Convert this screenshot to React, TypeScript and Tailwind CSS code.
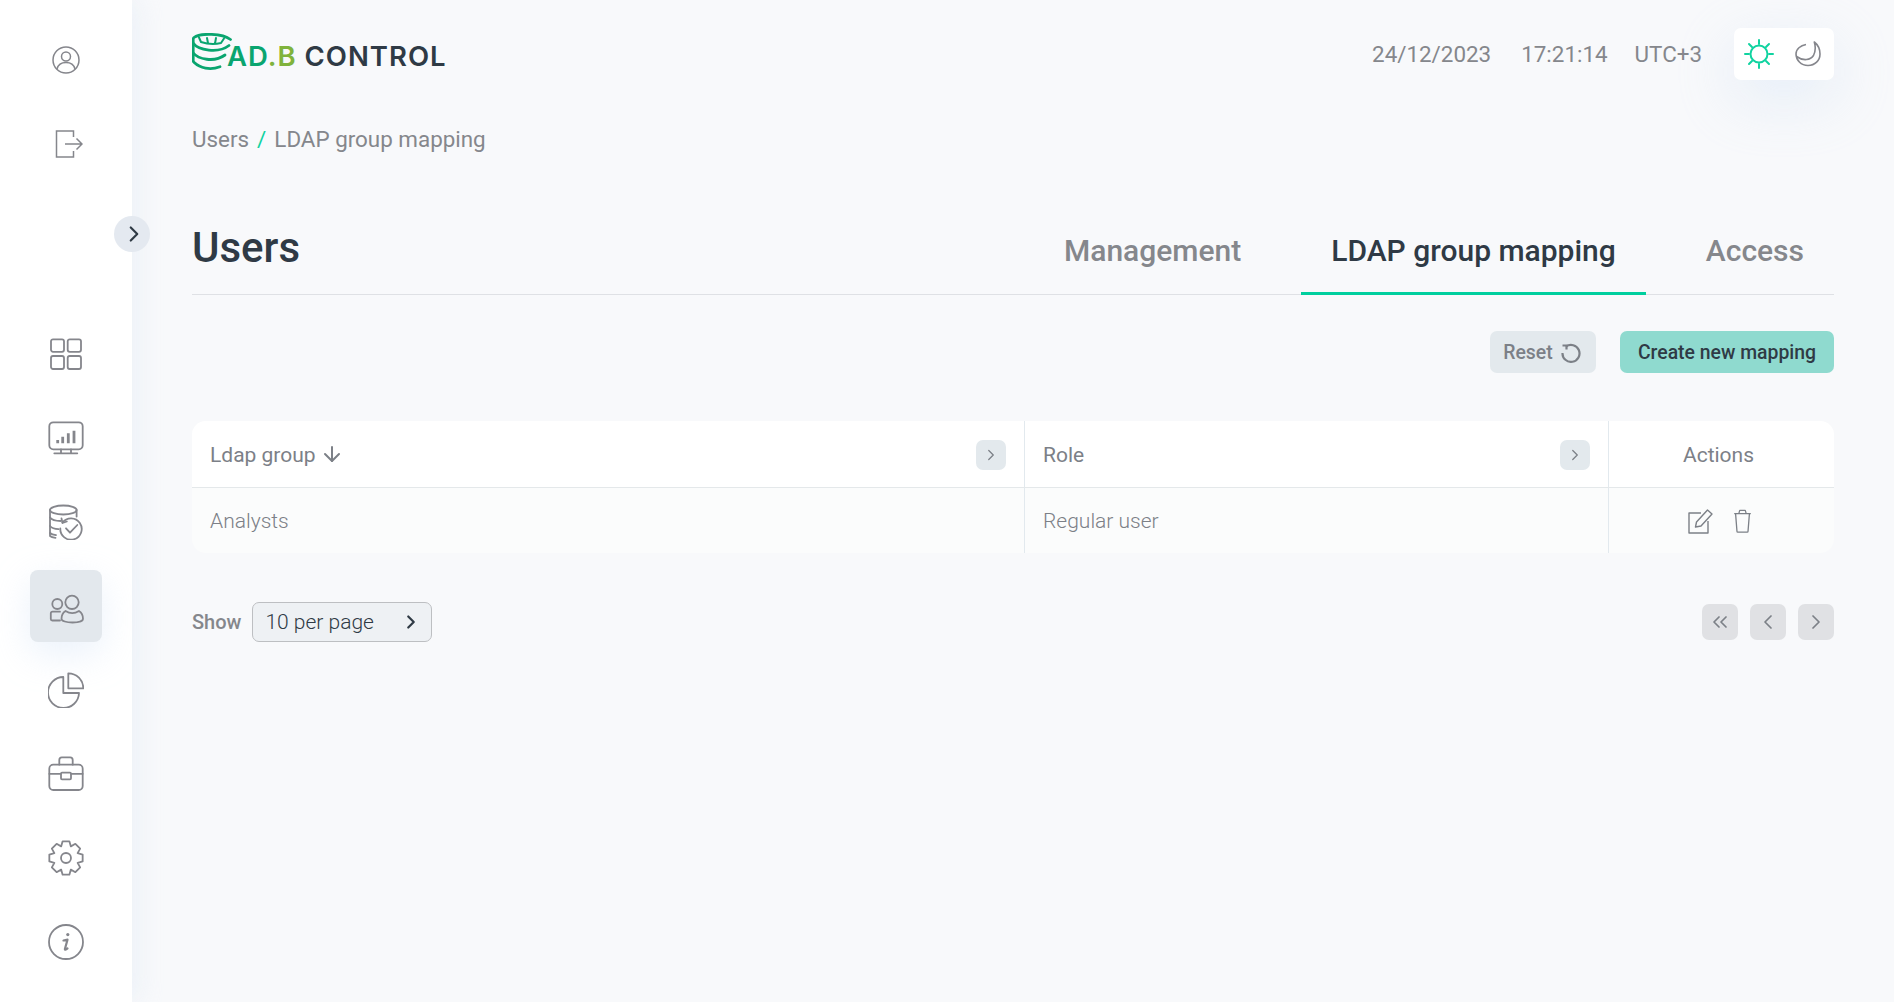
import React from 'react';
import { ArrowDown, ChevronLeft, ChevronRight, ChevronsLeft } from 'lucide-react';

const NavIcon: React.FC<{ children: React.ReactNode }> = ({ children }) => (
  <svg width="36" height="36" viewBox="0 0 36 36" fill="none" stroke="#85868c" strokeWidth="1.8" strokeLinecap="round" strokeLinejoin="round">
    {children}
  </svg>
);

// 8 tooth gear outline, centred in the 36 box
const gearPath = () => {
  const pts: string[] = [];
  for (let i = 0; i < 8; i++) {
    const a = (i * Math.PI) / 4 - Math.PI / 2;
    [
      [-0.39, 12.6],
      [-0.2, 17],
      [0.2, 17],
      [0.39, 12.6],
    ].forEach(([d, r]) => {
      pts.push(`${(18 + r * Math.cos(a + d)).toFixed(2)} ${(18 + r * Math.sin(a + d)).toFixed(2)}`);
    });
  }
  return `M${pts.join('L')}z`;
};

const NAV_ITEMS = [
  {
    id: 'dashboard',
    icon: (
      <>
        <rect x="3" y="3.300" width="13" height="12.500" rx="2" />
        <rect x="19.700" y="3.300" width="13.300" height="12.500" rx="2" />
        <rect x="3" y="20" width="13" height="13" rx="2" />
        <rect x="19.700" y="20" width="13.300" height="13" rx="2" />
      </>
    ),
  },
  {
    id: 'monitoring',
    icon: (
      <>
        <rect x="1.300" y="2.300" width="33.400" height="27" rx="4" />
        <path d="M13 29.300v4M23 29.300v4M6.300 33.300h23" />
        <path d="M9.700 23.300V20M14.700 23.300v-6.600M20.300 23.300v-10M26 23.300V10.700" strokeWidth="2.800" strokeLinecap="butt" />
      </>
    ),
  },
  {
    id: 'backups',
    icon: (
      <>
        <ellipse cx="15.300" cy="6" rx="13.300" ry="4.500" />
        <path d="M2 6v26c1 .9 3 1.500 5.500 1.800" />
        <path d="M28.600 6v6.500" />
        <path d="M2 13.500c1.500 2 5.500 3.500 10.500 3.500M2 22c1.500 1.700 4.500 3 8.500 3.200M2 29c1.200 1 3.500 1.800 6 2.200" />
        <path d="M14.500 18.500a10.700 10.700 0 1 1-2.200 6" />
        <path d="M13.500 14.500l1 4.500 4.300-1.500" />
        <path d="M18 24.300l4 4.400 7.300-7.700" />
      </>
    ),
  },
  {
    id: 'users',
    active: true,
    icon: (
      <>
        <circle cx="9.300" cy="16" r="5" />
        <circle cx="24" cy="14.300" r="6.700" />
        <path d="M12 23.700H4.500c-1 0-1.700.8-1.700 1.700V31c0 .8.700 1.500 1.500 1.500H12" />
        <path d="M13.500 31c0-4 1.500-6.500 4-8 4 2.500 9.500 2.500 13.500 0 2.500 1.500 4 4 4 8 0 2-4.500 3.500-10.500 3.500S13.500 33 13.500 31z" />
      </>
    ),
  },
  {
    id: 'reports',
    icon: (
      <>
        <path d="M15.300 5A15.500 15.500 0 1 0 31 21H15.300z" />
        <path d="M20.300 1.300V16.300H35.300A15 15 0 0 0 20.300 1.300z" />
      </>
    ),
  },
  {
    id: 'tools',
    icon: (
      <>
        <rect x="1.300" y="8.700" width="33.400" height="25.300" rx="4" />
        <path d="M11.300 8.700V4c0-1.500 1-2.700 2.500-2.700h8.400c1.500 0 2.500 1.200 2.500 2.700v4.700" />
        <path d="M1.300 17.800H13M23 17.800h11.700" />
        <rect x="13" y="16.700" width="10" height="6.600" rx="1" />
      </>
    ),
  },
  {
    id: 'settings',
    icon: (
      <>
        <circle cx="18" cy="18" r="5" />
        <path d={gearPath()} />
      </>
    ),
  },
  {
    id: 'info',
    icon: (
      <>
        <circle cx="18" cy="18" r="17" />
        <path d="M15.500 16.500l4-.8-2.600 9.300c-.2.900.8 1 2.600-.6" strokeWidth="2.200" />
        <path d="M19.800 10.500v.1" strokeWidth="3.200" />
      </>
    ),
  },
];

const SmallButton: React.FC<{ children: React.ReactNode; className: string }> = ({ children, className }) => (
  <button className={`flex items-center justify-center rounded-[7px] text-[#7c8087] ${className}`}>{children}</button>
);

export default function App() {
  return (
    <div className="flex h-[1002px] w-full overflow-hidden bg-[#f8f9fb] text-[21px] [font-family:Roboto,sans-serif]">
      <aside className="relative flex w-[132px] shrink-0 flex-col bg-white shadow-[6px_0_24px_rgba(222,232,244,0.45)]">
        <div className="mt-6 flex flex-col gap-3">
          <div className="flex h-[72px] items-center justify-center">
            <svg width="28" height="28" viewBox="0 0 28 28" fill="none" stroke="#85868c" strokeWidth="1.5">
              <circle cx="14" cy="14" r="13" />
              <circle cx="14" cy="10.500" r="4.500" />
              <path d="M5 23c1-4 4-6.500 9-6.500s8 2.500 9 6.500" />
            </svg>
          </div>
          <div className="flex h-[72px] items-center justify-center pl-[6px]">
            <svg width="28" height="28" viewBox="0 0 28 28" fill="none" stroke="#85868c" strokeWidth="1.5">
              <path d="M18.500 7V1H1.500v26h17v-6" />
              <path d="M10 14h17M21.500 8.500L27 14l-5.500 5.500" />
            </svg>
          </div>
        </div>
        <button className="absolute left-[114px] top-[216px] z-10 flex h-9 w-9 items-center justify-center rounded-full bg-[#e4e9f0] pl-[3px] text-[#2f3a45]">
          <ChevronRight size={26} strokeWidth={2} />
        </button>
        <nav className="mt-[138px] flex flex-col gap-3 px-[30px]">
          {NAV_ITEMS.map(item => (
            <div
              key={item.id}
              className={`flex h-[72px] items-center justify-center rounded-[8px] ${
                item.active ? 'bg-[#e3e8ed] shadow-[0_12px_36px_rgba(205,222,245,0.4)]' : ''
              }`}
            >
              <NavIcon>{item.icon}</NavIcon>
            </div>
          ))}
        </nav>
      </aside>

      <main className="flex min-w-0 flex-1 flex-col pl-[60px] pr-[60px] pt-7">
        <header className="flex h-[52px] items-center justify-between">
          <div className="mt-[5px] flex items-start self-start">
            <svg width="40" height="38" viewBox="0 0 40 38" fill="none" stroke="#0aa56f" strokeWidth="2.800" strokeLinecap="round" strokeLinejoin="round" className="shrink-0">
              <path d="M38.500 6.500C30 0 8 0 2 4.500c-1 1-.8 1-.8 2v21c0 1 .2 1.300 1 2C8 35 18 37.500 28 33.700" />
              <path d="M1.300 10.300C6 17 26 21 37 12.500" />
              <path d="M1.300 20C6 26 22 30 33 22" />
              <path d="M9 9l-2-4.500M15 5l1 5M24 5l-1 5.500M32 5.500L29 10M9 9c6 2 14 2.500 20 1" strokeWidth="2" />
            </svg>
            <span className="ml-[-5px] mt-[10px] whitespace-nowrap text-[27.5px] font-semibold leading-[26px] tracking-[1px] text-[#2f3a45] [font-family:Inter,sans-serif]">
              <span className="text-[#0aa56f]">AD</span>
              <span className="text-[#80b33c]">.B</span> CONTROL
            </span>
          </div>
          <div className="flex items-center text-[22.4px] text-[#85878c]">
            <span className="pt-[2px]">24/12/2023</span>
            <span className="ml-[30px] pt-[2px]">17:21:14</span>
            <span className="ml-[27px] pt-[2px]">UTC+3</span>
            <div className="ml-[32px] flex h-[52px] w-[100px] items-center justify-center gap-[21px] rounded-[7px] bg-white pr-[3px] shadow-[0_18px_60px_rgba(205,222,245,0.45)]">
              <svg width="30" height="30" viewBox="0 0 30 30" fill="none" stroke="#10d3a0" strokeWidth="2" strokeLinecap="round">
                <circle cx="15" cy="15" r="8.500" />
                <path d="M15 1v4M15 25v4M1 15h4M25 15h4M5 5l3 3M22 22l3 3M25 5l-3 3M8 22l-3 3" />
              </svg>
              <svg width="26" height="26" viewBox="0 0 26 26" fill="none" stroke="#85868c" strokeWidth="1.600" strokeLinejoin="round">
                <path d="M11 3.500C5.500 4.500 1 8 1 13c0 6 5 11.500 12 11.500S25 19.500 25 13c0-5-2.500-9.500-5.700-12 1.500 5 1.500 9-.8 13.500-3 4.500-10 6-17 1" />
              </svg>
            </div>
          </div>
        </header>

        <div className="mt-[43px] flex items-center text-[22.4px] leading-[32px] text-[#85878c]">
          <span>Users</span>
          <span className="mx-2 text-[#10d3a0]">/</span>
          <span>LDAP group mapping</span>
        </div>

        <div className="mt-[43px] flex h-[97px] items-end justify-between border-b border-[#dfe1e5]">
          <h1 className="mb-[22px] text-[42px] font-medium leading-[48px] text-[#2f3a45]">Users</h1>
          <div className="mb-[-1px] flex gap-[30px] text-[30px] font-medium leading-[40px]">
            <div className="px-[30px] pb-[24px] text-[#85878c]">Management</div>
            <div className="border-b-[3px] border-[#00cf9e] px-[30px] pb-[21px] text-[#2f3a45]">LDAP group mapping</div>
            <div className="px-[30px] pb-[24px] text-[#85878c]">Access</div>
          </div>
        </div>

        <div className="mt-[36px] flex justify-end gap-6">
          <button className="flex h-[42px] w-[106px] items-center justify-center gap-2 rounded-[7px] bg-[#e3e9ed] pr-[2px] pt-[1px] text-[19.4px] font-medium text-[#7c8087]">
            Reset
            <svg width="20" height="20" viewBox="0 0 20 20" fill="none" stroke="#7c8087" strokeWidth="2.200">
              <path d="M5 3.500a8.500 8.500 0 1 1-3.500 6.500" />
              <path d="M1.500 2.500h4v4" />
            </svg>
          </button>
          <button className="h-[42px] w-[214px] rounded-[7px] bg-[#8fdacf] pt-[1px] text-[19.4px] font-medium text-[#2f3a45]">Create new mapping</button>
        </div>

        <div className="mt-12 overflow-hidden rounded-[14px] bg-[#fbfcfc]">
          <div className="flex h-[67px] border-b border-[#e4e8ea] bg-white text-[#7c8087]">
            <div className="flex w-[833px] items-center justify-between border-r border-[#e2e9ee] pl-[18px] pr-[18px] pt-[3px]">
              <span className="flex items-center gap-[4px]">
                Ldap group
                <ArrowDown size={24} strokeWidth={2} className="mt-[-3px]" />
              </span>
              <SmallButton className="mt-[-2px] h-[30px] w-[30px] bg-[#e3e9ed]">
                <ChevronRight size={18} strokeWidth={1.75} />
              </SmallButton>
            </div>
            <div className="flex w-[584px] items-center justify-between border-r border-[#e2e9ee] pl-[18px] pr-[18px] pt-[3px]">
              <span>Role</span>
              <SmallButton className="mt-[-2px] h-[30px] w-[30px] bg-[#e3e9ed]">
                <ChevronRight size={18} strokeWidth={1.75} />
              </SmallButton>
            </div>
            <div className="flex flex-1 items-center justify-center pr-[6px] pt-[3px]">Actions</div>
          </div>
          <div className="flex h-[65px] font-light text-[#7c8087]">
            <div className="flex w-[833px] items-center border-r border-[#e2e9ee] pl-[18px] pt-[2px]">Analysts</div>
            <div className="flex w-[584px] items-center border-r border-[#e2e9ee] pl-[18px] pt-[2px]">Regular user</div>
            <div className="flex flex-1 items-center justify-center gap-[20px] pr-[4px]">
              <svg width="26" height="26" viewBox="0 0 26 26" fill="none" stroke="#7c8087" strokeWidth="1.400" strokeLinejoin="round">
                <path d="M14 5H2v20h19V13" />
                <path d="M8.500 19l1-5L20.500 2l4.500 4-11 12z" />
              </svg>
              <svg width="19" height="24" viewBox="0 0 20 26" fill="none" stroke="#7c8087" strokeWidth="1.400" strokeLinejoin="round">
                <path d="M1 5h18M6 5l1-3.500h6L14 5" />
                <path d="M2.500 5l1.500 19c0 .6.500 1 1 1h10c.5 0 1-.4 1-1l1.500-19" />
              </svg>
            </div>
          </div>
        </div>

        <div className="mt-[49px] flex items-center justify-between">
          <div className="flex items-center">
            <span className="text-[20px] font-medium text-[#85878c]">Show</span>
            <div className="ml-[11px] flex h-10 w-[180px] items-center justify-between rounded-[7px] border border-[#bdbfc2] bg-[#eef1f4] pl-[12px] pr-[9px] pt-[2px] font-light text-[#2f3a45]">
              10 per page
              <ChevronRight size={22} strokeWidth={2.4} className="mt-[-2px] text-[#2f3a45]" />
            </div>
          </div>
          <div className="flex gap-3">
            <SmallButton className="h-9 w-9 bg-[#e0e1e4]">
              <ChevronsLeft size={24} strokeWidth={1.75} />
            </SmallButton>
            <SmallButton className="h-9 w-9 bg-[#e0e1e4]">
              <ChevronLeft size={24} strokeWidth={1.75} />
            </SmallButton>
            <SmallButton className="h-9 w-9 bg-[#e0e1e4]">
              <ChevronRight size={24} strokeWidth={1.75} />
            </SmallButton>
          </div>
        </div>
      </main>
    </div>
  );
}
